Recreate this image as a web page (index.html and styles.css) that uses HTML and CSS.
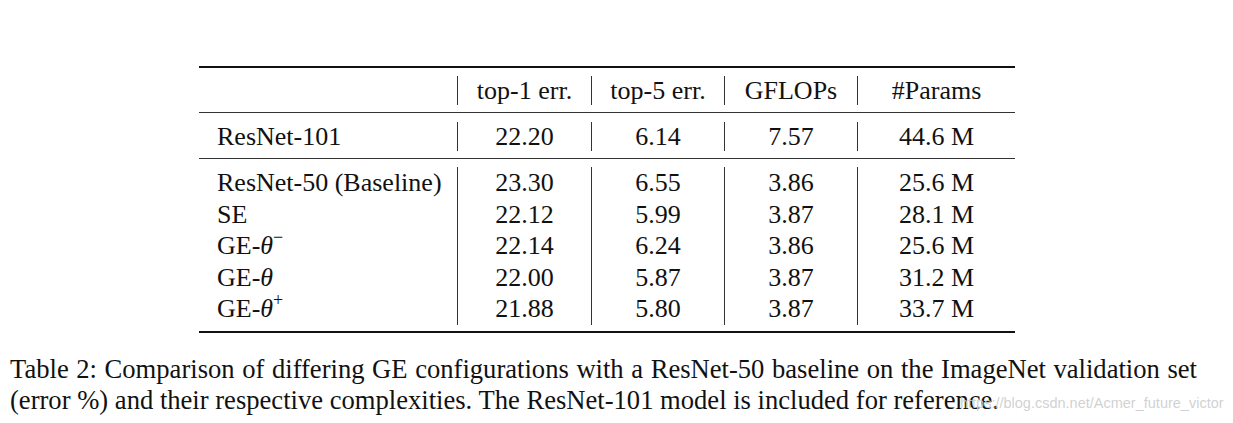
FILE: index.html
```html
<!DOCTYPE html>
<html lang="en">
<head>
    <meta charset="UTF-8">
    <title>Table 2</title>
    <link rel="stylesheet" href="styles.css">
</head>
<body>

    <!-- Table -->
    <div class="booktab">
        <div class="group head">
            <div class="cell name"></div>
            <div class="cell">top-1 err.</div>
            <div class="cell">top-5 err.</div>
            <div class="cell">GFLOPs</div>
            <div class="cell">#Params</div>
        </div>

        <div class="group ref">
            <div class="cell name">ResNet-101</div>
            <div class="cell">22.20</div>
            <div class="cell">6.14</div>
            <div class="cell">7.57</div>
            <div class="cell">44.6 M</div>
        </div>

        <div class="group body">
            <div class="cell name">ResNet-50 (Baseline)</div>
            <div class="cell">23.30</div>
            <div class="cell">6.55</div>
            <div class="cell">3.86</div>
            <div class="cell">25.6 M</div>

            <div class="cell name">SE</div>
            <div class="cell">22.12</div>
            <div class="cell">5.99</div>
            <div class="cell">3.87</div>
            <div class="cell">28.1 M</div>

            <div class="cell name">GE-<i class="sym">θ</i><sup class="idx">−</sup></div>
            <div class="cell">22.14</div>
            <div class="cell">6.24</div>
            <div class="cell">3.86</div>
            <div class="cell">25.6 M</div>

            <div class="cell name">GE-<i class="sym">θ</i></div>
            <div class="cell">22.00</div>
            <div class="cell">5.87</div>
            <div class="cell">3.87</div>
            <div class="cell">31.2 M</div>

            <div class="cell name">GE-<i class="sym">θ</i><sup class="idx">+</sup></div>
            <div class="cell">21.88</div>
            <div class="cell">5.80</div>
            <div class="cell">3.87</div>
            <div class="cell">33.7 M</div>
        </div>
    </div>

    <!-- Caption -->
    <p class="caption">
        <span class="line full">Table 2: Comparison of differing GE configurations with a ResNet-50 baseline on the ImageNet validation set</span>
        <span class="line">(error %) and their respective complexities. The ResNet-101 model is included for reference.</span>
        <span class="mark">https://blog.csdn.net/Acmer_future_victor</span>
    </p>

</body>
</html>
```

FILE: styles.css
```css
body {
    margin: 0;
    background: #ffffff;
    color: #111;
}

/* Table */
.booktab {
    margin: 66px 0 0 199px;
    width: 816px;
    border-top: 2px solid #111;
    border-bottom: 2px solid #111;
}

.group {
    display: grid;
    grid-template-columns: 258px 134px 133px 133px 158px;
}

.head {
    padding: 8px 0 7px;
    border-bottom: 1px solid #333;
    line-height: 29px;
}

.ref {
    padding: 9px 0 7px;
    border-bottom: 1px solid #333;
    line-height: 29px;
}

.body {
    padding: 8px 0 6.5px;
    line-height: 31.5px;
}

.cell {
    font-family: "Liberation Serif";
    font-size: 26px;
    text-align: center;
    border-left: 1px solid #333;
    white-space: nowrap;
}

.cell.name {
    text-align: left;
    padding-left: 18px;
    border-left: none;
}

.sym {
    font-family: "Liberation Serif";
    font-style: italic;
}

.idx {
    font-family: "Liberation Serif";
    font-size: 18px;
    line-height: 0;
    vertical-align: 11px;
}

/* Caption */
.caption {
    position: relative;
    margin: 21px 0 0 10px;
    width: 1187px;
    font-family: "Liberation Serif";
    font-size: 26.6px;
    line-height: 31px;
}

.line {
    display: block;
    font-family: "Liberation Serif";
    white-space: nowrap;
}

.line.full {
    text-align: justify;
    text-align-last: justify;
    white-space: normal;
}

.mark {
    position: absolute;
    left: 950px;
    top: 40px;
    font-family: "Liberation Sans";
    font-size: 14.5px;
    line-height: 18px;
    color: rgba(205, 205, 205, 0.92);
    white-space: nowrap;
}
```
